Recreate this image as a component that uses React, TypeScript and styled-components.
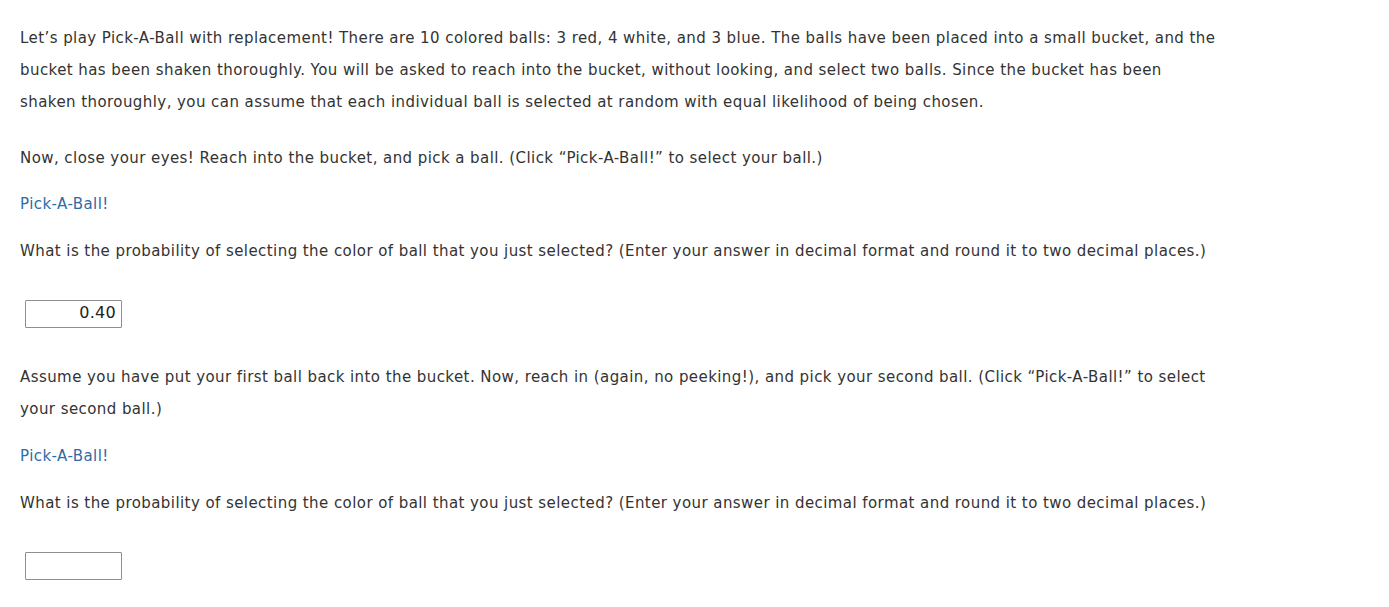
import React from "react";
import styled, { createGlobalStyle } from "styled-components";

const Global = createGlobalStyle`
  html, body { margin: 0; padding: 0; background: #fff; }
  body { font-family: Verdana, "DejaVu Sans", sans-serif; color: #333; }
`;

const Page = styled.div`
  padding: 22px 20px 0 20px;
  max-width: 1201px;
  font-size: 15px;
  letter-spacing: 0.43px;
`;

const Para = styled.p<{ $mt?: number }>`
  margin: ${(p) => p.$mt ?? 0}px 0 0 0;
  line-height: 32px;
`;

const LinkButton = styled.a<{ $mt?: number }>`
  display: block;
  margin-top: ${(p) => p.$mt ?? 0}px;
  line-height: 32px;
  color: #2f6ba6;
  text-decoration: none;
  cursor: pointer;
`;

const AnswerInput = styled.input<{ $mt?: number }>`
  display: block;
  box-sizing: border-box;
  margin: ${(p) => p.$mt ?? 0}px 0 0 5px;
  width: 97px;
  height: 28px;
  border: 1px solid #8f8f8f;
  border-radius: 1px;
  padding: 0 5px 3px 5px;
  font-family: Verdana, "DejaVu Sans", sans-serif;
  font-size: 16px;
  letter-spacing: 0.3px;
  color: #222;
  text-align: right;
  outline: none;
`;

export default function App() {
  return (
    <>
      <Global />
      <Page>
        <Para>
          Let’s play Pick-A-Ball with replacement! There are 10 colored balls: 3 red, 4 white, and 3 blue. The balls have been placed into a small bucket, and the bucket has been shaken thoroughly. You will be asked to reach into the bucket, without looking, and select two balls. Since the bucket has been shaken thoroughly, you can assume that each individual ball is selected at random with equal likelihood of being chosen.
        </Para>
        <Para $mt={24}>
          Now, close your eyes! Reach into the bucket, and pick a ball. (Click “Pick-A-Ball!” to select your ball.)
        </Para>
        <LinkButton $mt={14}>Pick-A-Ball!</LinkButton>
        <Para $mt={15}>
          What is the probability of selecting the color of ball that you just selected? (Enter your answer in decimal format and round it to two decimal places.)
        </Para>
        <AnswerInput $mt={33} defaultValue="0.40" />
        <Para $mt={33}>
          Assume you have put your first ball back into the bucket. Now, reach in (again, no peeking!), and pick your second ball. (Click “Pick-A-Ball!” to select your second ball.)
        </Para>
        <LinkButton $mt={15}>Pick-A-Ball!</LinkButton>
        <Para $mt={15}>
          What is the probability of selecting the color of ball that you just selected? (Enter your answer in decimal format and round it to two decimal places.)
        </Para>
        <AnswerInput $mt={33} defaultValue="" />
      </Page>
    </>
  );
}
